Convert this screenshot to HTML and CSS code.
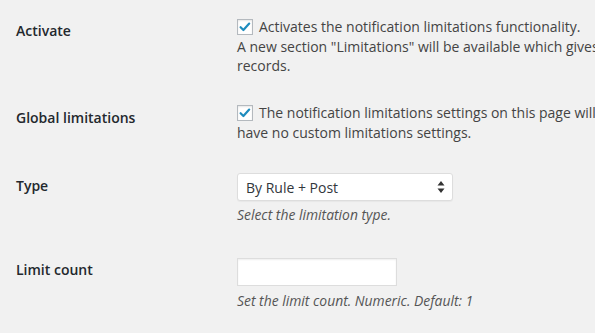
FILE: index.html
```html
<!DOCTYPE html>
<html>
<head>
<meta charset="utf-8">
<link rel="stylesheet" href="styles.css">
</head>
<body>
<div class="form">
  <div class="row row1">
    <div class="label">Activate</div>
    <div class="field">
      <label class="check"><span class="box"><svg viewBox="0 0 16 16" width="16" height="16"><path d="M3.6 8.2 L6.4 11 L12.2 4.6" fill="none" stroke="#1e8cbe" stroke-width="2.2" stroke-linecap="round" stroke-linejoin="round"/></svg></span>Activates the notification limitations functionality.<br>A new section "Limitations" will be available which gives you the possibility to limit notifications for the<br>records.</label>
    </div>
  </div>
  <div class="row row2">
    <div class="label">Global limitations</div>
    <div class="field">
      <label class="check"><span class="box"><svg viewBox="0 0 16 16" width="16" height="16"><path d="M3.6 8.2 L6.4 11 L12.2 4.6" fill="none" stroke="#1e8cbe" stroke-width="2.2" stroke-linecap="round" stroke-linejoin="round"/></svg></span>The notification limitations settings on this page will be used for all rules which<br>have no custom limitations settings.</label>
    </div>
  </div>
  <div class="row row3">
    <div class="label">Type</div>
    <div class="field">
      <div class="select">
        <span>By Rule + Post</span>
        <svg class="arrows" viewBox="0 0 8 14" width="8" height="14"><path d="M4 1 L7.5 5.5 L0.5 5.5 Z M4 13 L7.5 8.5 L0.5 8.5 Z" fill="#333"/></svg>
      </div>
      <p class="desc">Select the limitation type.</p>
    </div>
  </div>
  <div class="row row4">
    <div class="label">Limit count</div>
    <div class="field">
      <div class="input"></div>
      <p class="desc desc4">Set the limit count. Numeric. Default: 1</p>
    </div>
  </div>
</div>
</body>
</html>
```

FILE: styles.css
```css
html, body {
  margin: 0;
  padding: 0;
  background: #f1f1f1;
  overflow: hidden;
}
body {
  width: 595px;
  height: 333px;
  font-family: "Open Sans", "Liberation Sans", sans-serif;
  font-size: 14px;
  color: #444;
}
.form {
  padding-left: 16px;
}
.row {
  display: grid;
  grid-template-columns: 221px 1000px;
}
.label {
  font-weight: 600;
  color: #23282d;
  line-height: 20px;
}
.field {
  white-space: nowrap;
}
.check {
  display: block;
  line-height: 19.5px;
}
.box {
  display: inline-block;
  width: 14px;
  height: 14px;
  border: 1px solid #b4b9be;
  background: #fff;
  box-shadow: inset 0 1px 2px rgba(0,0,0,0.1);
  vertical-align: -3px;
  margin-right: 6px;
  position: relative;
}
.box svg {
  position: absolute;
  left: -1px;
  top: -1px;
}
.row1 { padding-bottom: 13.5px; }
.row1 .label { padding-top: 21px; }
.row1 .field { padding-top: 17px; }
.row2 { padding-bottom: 14px; }
.row2 .label { padding-top: 19px; }
.row2 .field { padding-top: 14px; }
.row3 { padding-bottom: 15px; }
.row3 .label { padding-top: 20px; }
.row3 .field { padding-top: 17px; }
.row4 .label { padding-top: 20px; }
.row4 .field { padding-top: 18px; }
.select {
  box-sizing: border-box;
  width: 216px;
  height: 28px;
  background: #fff;
  border: 1px solid #ddd;
  border-radius: 3px;
  box-shadow: 0 1px 1px rgba(0,0,0,0.04);
  display: flex;
  align-items: center;
  justify-content: space-between;
  padding: 0 7px 0 8px;
  color: #32373c;
}
.arrows {
  display: block;
}
.desc {
  margin: 4px 0 0;
  font-style: italic;
  line-height: 20px;
  color: #555;
  font-size: 13.9px;
}
.desc4 { margin-top: 5px; }
.input {
  box-sizing: border-box;
  width: 160px;
  height: 28px;
  background: #fff;
  border: 1px solid #ddd;
  box-shadow: inset 0 1px 2px rgba(0,0,0,0.07);
}
```
